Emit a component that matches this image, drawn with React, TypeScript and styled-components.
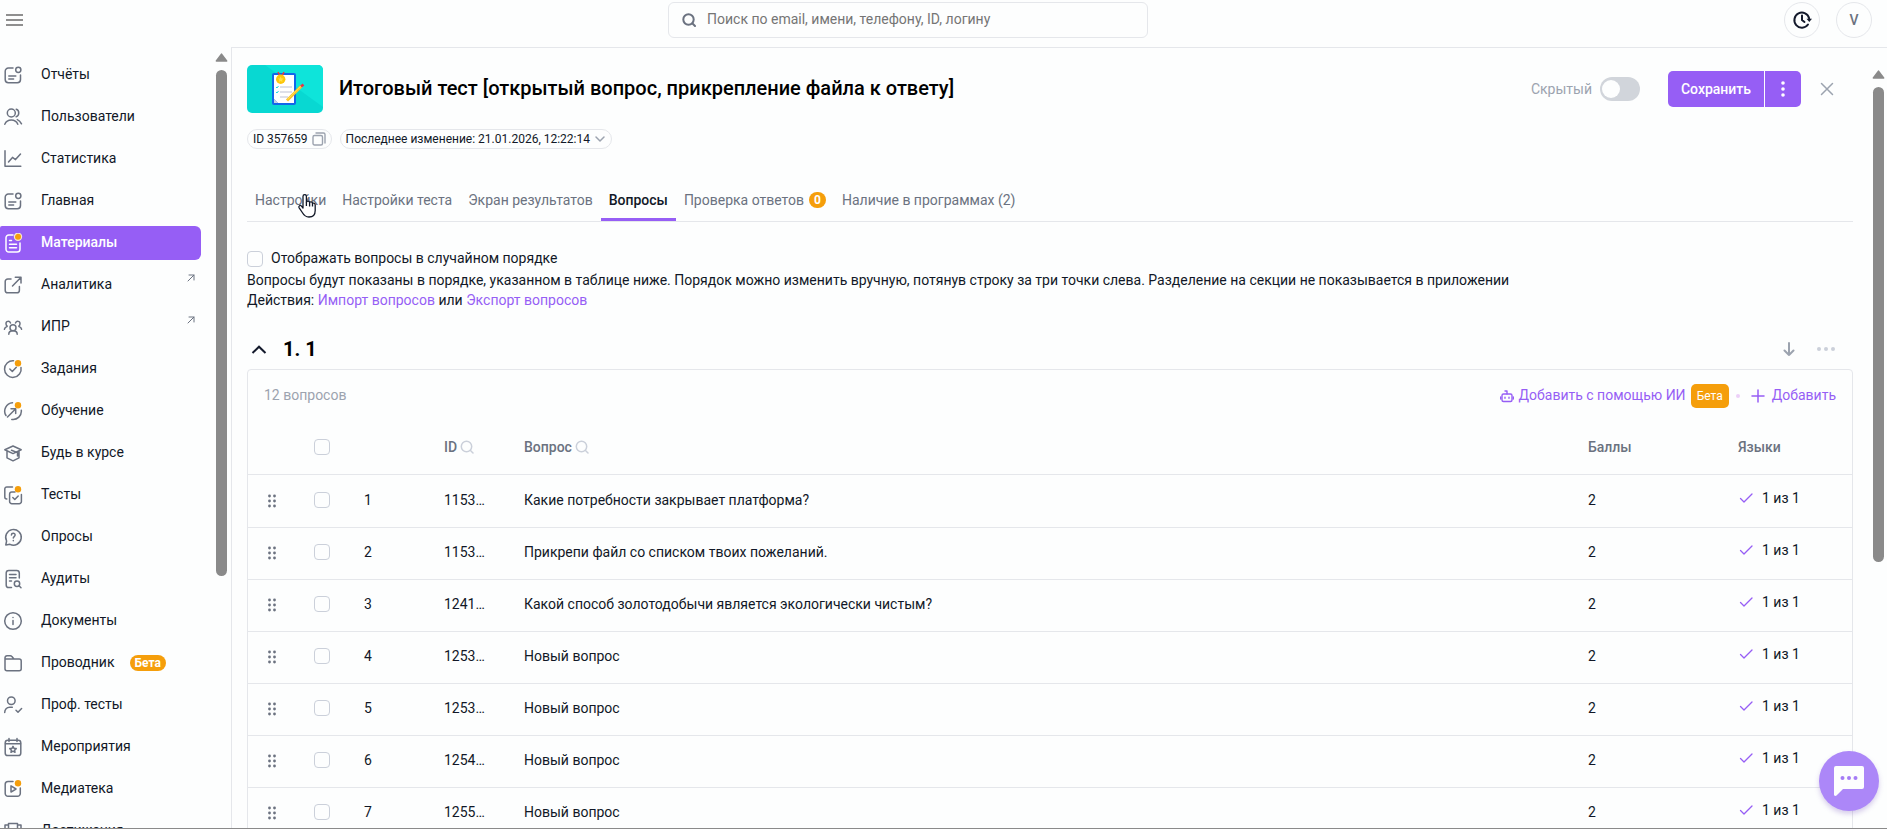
import React from "react";
import styled, { createGlobalStyle, css } from "styled-components";

const c = {
  bg: "#fdfefe",
  line: "#e5e7eb",
  text: "#111827",
  muted: "#6b7280",
  faint: "#9ca3af",
  purple: "#965ef5",
  orange: "#f59e0b",
  bar: "#8a8a8a",
};

const GlobalStyle = createGlobalStyle`
  *, *::before, *::after { box-sizing: border-box; }
  body {
    margin: 0;
    background: ${c.bg};
    color: ${c.text};
    font-family: Roboto, "Noto Sans", sans-serif;
    font-size: 14px;
    line-height: 20px;
  }
  button, input { font: inherit; color: inherit; }
  button { border: 0; padding: 0; background: none; cursor: pointer; }
  a { color: inherit; text-decoration: none; }
  svg { display: block; flex: none; }
`;

const Page = styled.div`
  display: flex;
  flex-direction: column;
  height: 100vh;
  overflow: hidden;
  border-bottom: 1px solid ${c.bar};
`;

/* ---------- top bar ---------- */

const TopBar = styled.header`
  display: flex;
  justify-content: space-between;
  align-items: flex-start;
  flex: none;
  height: 47px;
  padding: 2px 15px 0 0;
`;

const MenuButton = styled.button`
  display: flex;
  align-items: center;
  width: 32px;
  height: 36px;
  padding-left: 6px;
`;

const SearchBox = styled.label`
  display: flex;
  align-items: center;
  gap: 11px;
  width: 480px;
  height: 36px;
  padding: 0 13px;
  border: 1px solid ${c.line};
  border-radius: 6px;
  color: ${c.muted};
`;

const SearchInput = styled.input`
  flex: 1;
  min-width: 0;
  height: 32px;
  padding: 0 0 2px;
  border: 0;
  outline: 0;
  background: none;
  &::placeholder { color: #757575; opacity: 1; }
`;

const TopActions = styled.div`
  display: flex;
  gap: 16px;
`;

const RoundButton = styled.button`
  display: flex;
  align-items: center;
  justify-content: center;
  width: 36px;
  height: 36px;
  border: 1px solid ${c.line};
  border-radius: 50%;
  color: ${c.muted};
  font-weight: 500;
`;

/* ---------- frame ---------- */

const Body = styled.div`
  display: flex;
  flex: 1;
  min-height: 0;
`;

const Sidebar = styled.aside`
  display: flex;
  flex: none;
  justify-content: space-between;
  width: 231px;
  padding-right: 3px;
`;

const NavList = styled.nav`
  display: flex;
  flex-direction: column;
  gap: 8px;
  width: 201px;
  padding-top: 11px;
  overflow: hidden;
`;

const NavItem = styled.a<{ $active?: boolean }>`
  display: flex;
  flex: none;
  align-items: center;
  height: 34px;
  padding: 0 6px 0 3px;
  border-radius: 2px 6px 6px 2px;
  color: ${c.text};
  ${(p) =>
    p.$active &&
    css`
      background: ${c.purple};
      color: #fff;
      font-weight: 500;
    `}
`;

const NavIcon = styled.span<{ $active?: boolean }>`
  display: block;
  margin-right: 18px;
  color: ${(p) => (p.$active ? "#fff" : c.muted)};
`;

const NavText = styled.span`
  padding-bottom: 2px;
`;

const Outward = styled.span`
  align-self: flex-start;
  margin: 6px 0 0 auto;
  color: ${c.muted};
`;

const Pill = styled.span`
  margin-left: 15px;
  padding: 0 5px;
  border-radius: 8px;
  background: ${c.orange};
  color: #fff;
  font-size: 12px;
  font-weight: 700;
  line-height: 16px;
`;

const ScrollTrack = styled.div<{ $top: number }>`
  display: flex;
  flex: none;
  flex-direction: column;
  align-items: center;
  gap: 8px;
  width: 13px;
  padding-top: ${(p) => p.$top}px;
`;

const ScrollThumb = styled.div<{ $size: number }>`
  width: 11px;
  height: ${(p) => p.$size}%;
  border-radius: 6px;
  background: ${c.bar};
`;

const Main = styled.main`
  display: flex;
  flex: 1;
  min-width: 0;
  padding-right: 2px;
  border: solid ${c.line};
  border-width: 1px 0 0 1px;
`;

const Content = styled.div`
  flex: 1;
  min-width: 0;
  padding: 17px 19px 0 15px;
  overflow: hidden;
`;

/* ---------- test header ---------- */

const TitleRow = styled.div`
  display: flex;
  align-items: center;
`;

const Title = styled.h1`
  flex: 1;
  margin: 0 16px;
  padding-bottom: 2px;
  color: #000;
  font-size: 20px;
  font-weight: 500;
  line-height: 28px;
`;

const SwitchLabel = styled.label`
  display: flex;
  align-items: center;
  gap: 8px;
  margin-right: 28px;
  color: ${c.faint};
`;

const Switch = styled.input`
  appearance: none;
  display: flex;
  align-items: center;
  width: 40px;
  height: 24px;
  margin: 0;
  padding: 0 2px;
  border-radius: 12px;
  background: #d1d5db;
  &::before {
    content: "";
    width: 18px;
    height: 18px;
    border-radius: 50%;
    background: ${c.bg};
  }
`;

const SplitButton = styled.div`
  display: flex;
  gap: 1px;
  height: 36px;
  border-radius: 5px;
  overflow: hidden;
`;

const PurpleButton = styled.button<{ $width: number }>`
  display: flex;
  align-items: center;
  justify-content: center;
  width: ${(p) => p.$width}px;
  background: ${c.purple};
  color: #fff;
  font-weight: 500;
`;

const CloseButton = styled.button`
  margin: 0 19px;
  color: ${c.faint};
`;

const Chips = styled.div`
  display: flex;
  gap: 8px;
  margin-top: 16px;
`;

const Chip = styled.button`
  display: flex;
  align-items: center;
  gap: 4px;
  height: 20px;
  padding: 0 5px;
  border: 1px solid ${c.line};
  border-radius: 10px;
  font-size: 12px;
  svg { color: ${c.faint}; }
`;

const Tabs = styled.nav`
  display: flex;
  margin-top: 30px;
  border-bottom: 1px solid ${c.line};
`;

const Tab = styled.a<{ $active?: boolean }>`
  display: flex;
  position: relative;
  align-items: center;
  gap: 5px;
  height: 42px;
  padding: 0 8px;
  color: ${(p) => (p.$active ? c.text : c.muted)};
  font-weight: ${(p) => (p.$active ? 500 : 400)};
  box-shadow: ${(p) => (p.$active ? `inset 0 -3px ${c.purple}` : "none")};
`;

const Count = styled.span`
  width: 17px;
  border-radius: 8px;
  background: ${c.orange};
  color: #fff;
  font-size: 12px;
  font-weight: 700;
  line-height: 16px;
  text-align: center;
`;

const Pointer = styled.span`
  position: absolute;
  top: 14px;
  left: 50px;
`;

/* ---------- options and section ---------- */

const Options = styled.div`
  margin-top: 26px;
`;

const CheckLabel = styled.label`
  display: flex;
  align-items: center;
  gap: 8px;
  height: 22px;
`;

const CheckText = styled.span`
  padding-bottom: 2px;
`;

const Check = styled.input`
  appearance: none;
  display: block;
  width: 16px;
  height: 16px;
  margin: 0;
  border: 1px solid #cbd0da;
  border-radius: 4px;
  background: ${c.bg};
`;

const Line = styled.p`
  margin: 0;
`;

const PurpleLink = styled.a`
  color: ${c.purple};
`;

const SectionHead = styled.div`
  display: flex;
  align-items: center;
  height: 38px;
  margin-top: 21px;
  padding: 0 17px 2px 2px;
`;

const IconButton = styled.button`
  color: ${c.faint};
`;

const SectionTitle = styled.h2`
  flex: 1;
  margin: 0 0 0 14px;
  color: #000;
  font-size: 20px;
  font-weight: 700;
  line-height: 28px;
`;

const SectionTools = styled.div`
  display: flex;
  align-items: center;
  gap: 20px;
`;

const Card = styled.section`
  border: 1px solid ${c.line};
  border-radius: 4px;
`;

const CardBar = styled.div`
  display: flex;
  align-items: center;
  height: 52px;
  padding: 0 16px;
`;

const Total = styled.span`
  flex: 1;
  padding-bottom: 2px;
  color: ${c.faint};
`;

const Action = styled.button<{ $gap: number }>`
  display: flex;
  align-items: center;
  gap: ${(p) => p.$gap}px;
  color: ${c.purple};
`;

const ActionText = styled.span`
  padding-bottom: 2px;
`;

const Badge = styled.span`
  padding: 0 6px;
  border-radius: 5px;
  background: ${c.orange};
  color: #fff;
  font-size: 12px;
  line-height: 24px;
`;

const Dot = styled.span`
  width: 4px;
  height: 4px;
  margin: 0 11px 0 7px;
  border-radius: 50%;
  background: #ecd0f8;
`;

const Table = styled.table`
  width: 100%;
  border-collapse: separate;
  border-spacing: 0;
  table-layout: fixed;
`;

const Th = styled.th<{ $width?: number }>`
  width: ${(p) => (p.$width ? `${p.$width}px` : "auto")};
  height: 53px;
  padding: 0 16px 2px;
  border-bottom: 1px solid ${c.line};
  color: ${c.muted};
  font-weight: 500;
  text-align: left;
`;

const Heading = styled.span`
  display: flex;
  align-items: center;
  gap: 3px;
  svg { color: #cbd0da; }
`;

const Td = styled.td`
  height: 52px;
  padding: 0 16px 3px;
  border-bottom: 1px solid ${c.line};
  overflow: hidden;
  text-overflow: ellipsis;
  white-space: nowrap;
  tr:first-child > & { height: 53px; }
`;

const DragTd = styled(Td)`
  padding: 0 16px 1px 20px;
`;

const Langs = styled.span`
  display: flex;
  align-items: center;
  gap: 8px;
  padding-bottom: 4px;
  svg { color: ${c.purple}; }
`;

const ChatButton = styled.button`
  position: fixed;
  right: 8px;
  bottom: 18px;
  display: flex;
  align-items: center;
  justify-content: center;
  width: 60px;
  height: 60px;
  border-radius: 50%;
  background: #ac87f8;
  box-shadow: 0 3px 5px rgba(100, 60, 180, 0.25);
`;

/* ---------- icons ---------- */

const Svg = ({ size = 20, w = 1.5, children }: { size?: number; w?: number; children: React.ReactNode }) => (
  <svg
    width={size}
    height={size}
    viewBox={`0 0 ${size} ${size}`}
    fill="none"
    stroke="currentColor"
    strokeWidth={w}
    strokeLinecap="round"
    strokeLinejoin="round"
    aria-hidden="true"
  >
    {children}
  </svg>
);

const OrangeDot = () => <circle cx="15" cy="4.2" r="3.2" fill={c.orange} stroke="none" />;

const icons: Record<string, React.ReactNode> = {
  report: (
    <>
      <path d="M10 3H5.4A3.2 3.2 0 0 0 2.2 6.2v8.3a3.2 3.2 0 0 0 3.2 3.2h8.9a3.2 3.2 0 0 0 3.2-3.2V10" />
      <circle cx="15.3" cy="4.8" r="2.6" />
      <path d="M5.8 11h7M5.8 14h4.8" />
    </>
  ),
  users: (
    <>
      <circle cx="8.3" cy="6" r="4" />
      <path d="M13.2 2.3c3.4 1 3.4 6.3 0 7.4M1.8 17.3c2.4-5.6 10.6-5.6 13 0M14.3 12.6c1.8.7 3.2 2.2 4.2 4.2" />
    </>
  ),
  stats: <path d="M2 1.8v15.5h15.8M5.5 13l4-4.6 3 2.2 5-5.6" />,
  doc: (
    <>
      <path d="M10 2H5.8A2.8 2.8 0 0 0 3 4.8v11.4A2.8 2.8 0 0 0 5.8 19h8.4a2.8 2.8 0 0 0 2.8-2.8V10M6.5 7.5h2M6.5 11.2h7M6.5 14.8h7" />
      <circle cx="15" cy="3.8" r="3.6" fill={c.orange} stroke="#f3e4d4" strokeWidth="1.2" />
    </>
  ),
  external: (
    <>
      <path d="M8 4H4.8A2.6 2.6 0 0 0 2.2 6.6v8.6a2.6 2.6 0 0 0 2.6 2.6h9a2.6 2.6 0 0 0 2.6-2.6V11.5" />
      <path d="M9.5 11 17.8 2.500M12.3 2.2h5.7v5.7" />
    </>
  ),
  group: (
    <>
      <circle cx="10" cy="10.8" r="3" />
      <path d="M5.8 17.2c0-2 1.8-3.4 4.2-3.4s4.2 1.4 4.2 3.4M7.5 6C6.4 3.4 2.8 4 3 6.8c0 1 .4 1.8 1.2 2.3M4 9.6c-1.5.4-2.3 1.4-2.6 2.6M12.5 6c1.1-2.6 4.7-2 4.5.8 0 1-.4 1.8-1.2 2.3M16 9.6c1.5.4 2.3 1.4 2.6 2.6" />
    </>
  ),
  task: (
    <>
      <path d="M10.5 1.8A8.3 8.3 0 1 0 18 8.5M6.8 10l2.5 2.5 4-4.3" />
      <OrangeDot />
    </>
  ),
  learn: (
    <>
      <path d="M3 14.5A8.3 8.3 0 0 1 9.5 1.8M18.3 9.2a8.3 8.3 0 0 1-9.5 9.2M4.5 16l8-8M8 7.8h4.7v4.7" />
      <OrangeDot />
    </>
  ),
  cap: <path d="M10 3 1.8 6.8 10 10.6l8.2-3.8L10 3ZM4 8.5v6.3l6 3 6-3V8.5M8.5 7.2l6 2.4v3.4" />,
  tests: (
    <>
      <path d="M9.5 2H3.8A2 2 0 0 0 1.8 4v8a2 2 0 0 0 2 2M12 7H8.8a2.2 2.2 0 0 0-2.2 2.2v7.3a2.2 2.2 0 0 0 2.2 2.2h7.4a2.2 2.2 0 0 0 2.2-2.2V9.5M9.8 12.5l2 2 3.4-3.5" />
      <OrangeDot />
    </>
  ),
  poll: (
    <>
      <path d="M2.8 18l.8-4A7.8 7.8 0 1 1 7 17.3L2.8 18Z" />
      <path d="M8.4 8c.1-2.4 3.8-2.3 3.7.1 0 1.5-1.8 1.5-1.8 3M10.3 13.6v.1" />
    </>
  ),
  audit: (
    <>
      <path d="M8.5 18.5H5.8A2.6 2.6 0 0 1 3.2 15.9V4.1a2.6 2.6 0 0 1 2.6-2.6h7.9a2.6 2.6 0 0 1 2.6 2.6V9M6.5 5.5H13M6.5 8.8H13M6.5 12h2" />
      <circle cx="14" cy="14.8" r="2.7" />
      <path d="m16 16.8 2 1.900" />
    </>
  ),
  info: (
    <>
      <circle cx="10" cy="10" r="8.3" />
      <path d="M10 9.5v4M10 6.5v.1" />
    </>
  ),
  folder: (
    <path d="M2 7V4.8a2 2 0 0 1 2-2h3.3a2 2 0 0 1 1.6.8L11 6h5.2a2 2 0 0 1 2 2v7.8a2 2 0 0 1-2 2H4a2 2 0 0 1-2-2V6h9" />
  ),
  prof: (
    <>
      <circle cx="8.3" cy="5.8" r="3.8" />
      <path d="M1.7 17.5c0-3.3 2-5.2 5-5.2h2.6M13 15.3l2 2 3.6-3.7" />
    </>
  ),
  event: (
    <>
      <rect x="2.2" y="3.3" width="15.6" height="15.2" rx="2.6" />
      <path d="M2.5 6.8h15M6 1.5v3M14 1.5v3M10 9.3l1 2 2.2.3-1.6 1.5.4 2.2-2-1.1-2 1.1.4-2.2-1.6-1.5L9 11.3l1-2Z" />
    </>
  ),
  media: (
    <>
      <path d="M10 2.5H5a2.8 2.8 0 0 0-2.8 2.8v9.2A2.8 2.8 0 0 0 5 17.3h9.5a2.8 2.8 0 0 0 2.8-2.8V9M8 6.9v6.2l5-3.1-5-3.1Z" />
      <OrangeDot />
    </>
  ),
  trophy: (
    <path d="M5.5 2.5h9v6a4.5 4.5 0 0 1-9 0v-6ZM5.5 4H2v3.5a3.5 3.5 0 0 0 3.5 3M14.5 4H18v3.5a3.5 3.5 0 0 1-3.5 3M10 13v4M6.5 17.5h7" />
  ),
};

const Magnifier = ({ w = 1.5 }: { w?: number }) => (
  <Svg size={14} w={w}>
    <circle cx="6.5" cy="6.5" r="5.2" />
    <path d="m10.5 10.5 2.5 2.5" />
  </Svg>
);

const Arrow = () => (
  <svg width="13" height="9" viewBox="0 0 13 9" aria-hidden="true">
    <path d="M6.5 1.2 11.6 8H1.4Z" fill={c.bar} stroke={c.bar} strokeWidth="1.6" strokeLinejoin="round" />
  </svg>
);

const Cover = () => (
  <svg width="76" height="48" viewBox="0 0 76 48" role="img" aria-label="Обложка теста">
    <rect width="76" height="48" rx="5" fill="#08d8d2" />
    <path d="M18 0h53a5 5 0 0 1 5 5v37Z" fill="#0ee4da" />
    <rect x="25" y="8" width="24" height="32" rx="2" fill="#1266ea" />
    <path d="M27 10h20v28H31l-4-4Z" fill="#fff" />
    <path d="M27 34v4h4Z" fill="#c6d0e6" />
    <path d="m31 7 2 4M37 7l-2 4" stroke="#ef3340" strokeWidth="1.5" />
    <circle cx="33.7" cy="14.3" r="4.7" fill="#fdc60a" />
    <path d="m33.7 11.5.9 1.9 2 .2-1.5 1.4.4 2-1.8-1-1.8 1 .4-2-1.5-1.4 2-.2Z" fill="#ffe14a" />
    <path d="M33 22h12M33 27h12M33 32h8" stroke="#d3d6e2" strokeWidth="1.6" />
    <path d="m29 22 1 1 1.500-2M29 27l1 1 1.500-2" fill="none" stroke="#21d5df" strokeWidth="1" />
    <path d="M40 35.5 54.5 21" stroke="#fbc42c" strokeWidth="3" />
    <path d="M40.5 34.5 54 21" stroke="#ffe04d" strokeWidth="1" />
    <path d="m54 21.5 2.5-2" stroke="#e5354a" strokeWidth="2.6" />
  </svg>
);

const Hand = () => (
  <svg width="20" height="26" viewBox="0 0 20 26" aria-hidden="true">
    <path
      d="M6 15V3.5c0-2.4 3.4-2.4 3.4 0V9c.5-1.3 3-1.2 3.2.5.7-1 2.8-.7 2.9.9.9-.7 2.7-.2 2.7 1.5v5.6c0 3.5-1.9 6.5-6.2 6.5-3.5 0-5-1.5-6.7-4.5L2 14.6c-.7-1.7 1.2-2.9 2.5-1.5L6 15Z"
      fill="#fff"
      stroke="#111827"
      strokeWidth="1.3"
      strokeLinejoin="round"
    />
    <path d="M9.4 9v4M12.6 9.5v4M15.5 10.5v3" stroke="#111827" strokeWidth="1.3" />
  </svg>
);

const Grip = () => (
  <svg width="9" height="14" viewBox="0 0 9 14" fill={c.muted} aria-hidden="true">
    {[2, 7, 12].map((y) => (
      <React.Fragment key={y}>
        <circle cx="1.5" cy={y} r="1.4" />
        <circle cx="6.5" cy={y} r="1.4" />
      </React.Fragment>
    ))}
  </svg>
);

/* ---------- data ---------- */

type Item = { label: string; icon: string; active?: boolean; outward?: boolean; beta?: boolean };

const nav: Item[] = [
  { label: "Отчёты", icon: "report" },
  { label: "Пользователи", icon: "users" },
  { label: "Статистика", icon: "stats" },
  { label: "Главная", icon: "report" },
  { label: "Материалы", icon: "doc", active: true },
  { label: "Аналитика", icon: "external", outward: true },
  { label: "ИПР", icon: "group", outward: true },
  { label: "Задания", icon: "task" },
  { label: "Обучение", icon: "learn" },
  { label: "Будь в курсе", icon: "cap" },
  { label: "Тесты", icon: "tests" },
  { label: "Опросы", icon: "poll" },
  { label: "Аудиты", icon: "audit" },
  { label: "Документы", icon: "info" },
  { label: "Проводник", icon: "folder", beta: true },
  { label: "Проф. тесты", icon: "prof" },
  { label: "Мероприятия", icon: "event" },
  { label: "Медиатека", icon: "media" },
  { label: "Достижения", icon: "trophy" },
];

const rows: [string, string][] = [
  ["1153…", "Какие потребности закрывает платформа?"],
  ["1153…", "Прикрепи файл со списком твоих пожеланий."],
  ["1241…", "Какой способ золотодобычи является экологически чистым?"],
  ["1253…", "Новый вопрос"],
  ["1253…", "Новый вопрос"],
  ["1254…", "Новый вопрос"],
  ["1255…", "Новый вопрос"],
];

export default function App() {
  return (
    <Page>
      <GlobalStyle />
      <TopBar>
        <MenuButton aria-label="Меню">
          <svg width="17" height="12" viewBox="0 0 17 12" stroke="#8f8f8f" strokeWidth="2" aria-hidden="true">
            <path d="M0 1h17M0 6h17M0 11h17" />
          </svg>
        </MenuButton>
        <SearchBox>
          <Magnifier w={2} />
          <SearchInput type="text" aria-label="Поиск" placeholder="Поиск по email, имени, телефону, ID, логину" />
        </SearchBox>
        <TopActions>
          <RoundButton aria-label="История">
            <svg width="20" height="20" viewBox="0 0 20 20" fill="none" stroke="#141a2c" strokeWidth="2" strokeLinecap="round" aria-hidden="true">
              <path d="M16 14.5a7.5 7.5 0 1 1 1.2-6M10 5.5V10l2.5 2" />
              <path d="M14.5 8.8H20L17.3 12Z" fill="#141a2c" stroke="none" />
            </svg>
          </RoundButton>
          <RoundButton aria-label="Профиль">V</RoundButton>
        </TopActions>
      </TopBar>

      <Body>
        <Sidebar>
          <NavList>
            {nav.map((item) => (
              <NavItem key={item.label} href="#" $active={item.active}>
                <NavIcon $active={item.active}>
                  <Svg>{icons[item.icon]}</Svg>
                </NavIcon>
                <NavText>{item.label}</NavText>
                {item.beta && <Pill>Бета</Pill>}
                {item.outward && (
                  <Outward>
                    <Svg size={8} w={1}>
                      <path d="m1 7 6-6M2 1h5v5" />
                    </Svg>
                  </Outward>
                )}
              </NavItem>
            ))}
          </NavList>
          <ScrollTrack $top={6}>
            <Arrow />
            <ScrollThumb $size={65.3} />
          </ScrollTrack>
        </Sidebar>

        <Main>
          <Content>
            <TitleRow>
              <Cover />
              <Title>Итоговый тест [открытый вопрос, прикрепление файла к ответу]</Title>
              <SwitchLabel>
                Скрытый
                <Switch type="checkbox" role="switch" />
              </SwitchLabel>
              <SplitButton>
                <PurpleButton $width={96}>Сохранить</PurpleButton>
                <PurpleButton $width={36} aria-label="Ещё">
                  <svg width="4" height="16" viewBox="0 0 4 16" fill="currentColor" aria-hidden="true">
                    <circle cx="2" cy="2" r="1.8" />
                    <circle cx="2" cy="8" r="1.8" />
                    <circle cx="2" cy="14" r="1.8" />
                  </svg>
                </PurpleButton>
              </SplitButton>
              <CloseButton aria-label="Закрыть">
                <Svg size={14}>
                  <path d="m1.5 1.5 11 11M12.5 1.5l-11 11" />
                </Svg>
              </CloseButton>
            </TitleRow>

            <Chips>
              <Chip>
                ID 357659
                <Svg size={14} w={1.4}>
                  <rect x="1" y="3.5" width="9.5" height="9.5" rx="1.5" />
                  <path d="M4 1h7.5A1.5 1.5 0 0 1 13 2.5V11" />
                </Svg>
              </Chip>
              <Chip>
                Последнее изменение: 21.01.2026, 12:22:14
                <Svg size={12}>
                  <path d="m2 4 4 4 4-4" />
                </Svg>
              </Chip>
            </Chips>

            <Tabs>
              <Tab href="#">
                Настройки
                <Pointer>
                  <Hand />
                </Pointer>
              </Tab>
              <Tab href="#">Настройки теста</Tab>
              <Tab href="#">Экран результатов</Tab>
              <Tab href="#" $active>
                Вопросы
              </Tab>
              <Tab href="#">
                Проверка ответов <Count>0</Count>
              </Tab>
              <Tab href="#">Наличие в программах (2)</Tab>
            </Tabs>

            <Options>
              <CheckLabel>
                <Check type="checkbox" />
                <CheckText>Отображать вопросы в случайном порядке</CheckText>
              </CheckLabel>
              <Line>
                Вопросы будут показаны в порядке, указанном в таблице ниже. Порядок можно изменить вручную, потянув
                строку за три точки слева. Разделение на секции не показывается в приложении
              </Line>
              <Line>
                Действия: <PurpleLink href="#">Импорт вопросов</PurpleLink> или{" "}
                <PurpleLink href="#">Экспорт вопросов</PurpleLink>
              </Line>
            </Options>

            <SectionHead>
              <IconButton aria-label="Свернуть">
                <svg width="20" height="20" viewBox="0 0 20 20" fill="none" stroke="#141a2c" strokeWidth="2" aria-hidden="true">
                  <path d="m3.5 14 6.5-6.3 6.5 6.3" />
                </svg>
              </IconButton>
              <SectionTitle>1. 1</SectionTitle>
              <SectionTools>
                <IconButton aria-label="Вниз">
                  <Svg size={14} w={2}>
                    <path d="M7 1v12M2.5 8.5 7 13l4.5-4.5" />
                  </Svg>
                </IconButton>
                <IconButton aria-label="Действия с секцией">
                  <svg width="20" height="4" viewBox="0 0 20 4" fill="#cbd0da" aria-hidden="true">
                    <circle cx="3" cy="2" r="2" />
                    <circle cx="10" cy="2" r="2" />
                    <circle cx="17" cy="2" r="2" />
                  </svg>
                </IconButton>
              </SectionTools>
            </SectionHead>

            <Card>
              <CardBar>
                <Total>12 вопросов</Total>
                <Action $gap={5}>
                  <Svg size={14} w={1.4}>
                    <rect x="2" y="5" width="10" height="7.5" rx="1.5" />
                    <path d="M7 5V2H5M.7 8v2M13.3 8v2M5 8.2v1M9 8.2v1" />
                  </Svg>
                  <ActionText>Добавить с помощью ИИ</ActionText> <Badge>Бета</Badge>
                </Action>
                <Dot />
                <Action $gap={7}>
                  <Svg size={14}>
                    <path d="M7 1v12M1 7h12" />
                  </Svg>
                  <ActionText>Добавить</ActionText>
                </Action>
              </CardBar>
              <Table>
                <thead>
                  <tr>
                    <Th $width={50} />
                    <Th $width={50}>
                      <Check type="checkbox" aria-label="Выбрать все" />
                    </Th>
                    <Th $width={80} />
                    <Th $width={80}>
                      <Heading>
                        ID <Magnifier />
                      </Heading>
                    </Th>
                    <Th>
                      <Heading>
                        Вопрос <Magnifier />
                      </Heading>
                    </Th>
                    <Th $width={150}>Баллы</Th>
                    <Th $width={130}>Языки</Th>
                  </tr>
                </thead>
                <tbody>
                  {rows.map(([id, question], i) => (
                    <tr key={i}>
                      <DragTd>
                        <Grip />
                      </DragTd>
                      <Td>
                        <Check type="checkbox" aria-label={`Выбрать вопрос ${i + 1}`} />
                      </Td>
                      <Td>{i + 1}</Td>
                      <Td>{id}</Td>
                      <Td>{question}</Td>
                      <Td>2</Td>
                      <Td>
                        <Langs>
                          <Svg size={16} w={1.3}>
                            <path d="m2.5 8.5 3.5 3.5 8-8" />
                          </Svg>
                          1 из 1
                        </Langs>
                      </Td>
                    </tr>
                  ))}
                </tbody>
              </Table>
            </Card>
          </Content>
          <ScrollTrack $top={22}>
            <Arrow />
            <ScrollThumb $size={62.7} />
          </ScrollTrack>
        </Main>
      </Body>

      <ChatButton aria-label="Чат">
        <svg width="32" height="32" viewBox="0 0 32 32" aria-hidden="true">
          <path d="M3 1h26a2 2 0 0 1 2 2v19a2 2 0 0 1-2 2H10l-6.5 6.5C2.5 31.3 1 31 1 29.5V3a2 2 0 0 1 2-2Z" fill={c.bg} />
          <g fill="#a57cf6">
            <circle cx="9.5" cy="13" r="2" />
            <circle cx="16" cy="13" r="2" />
            <circle cx="22.5" cy="13" r="2" />
          </g>
        </svg>
      </ChatButton>
    </Page>
  );
}
